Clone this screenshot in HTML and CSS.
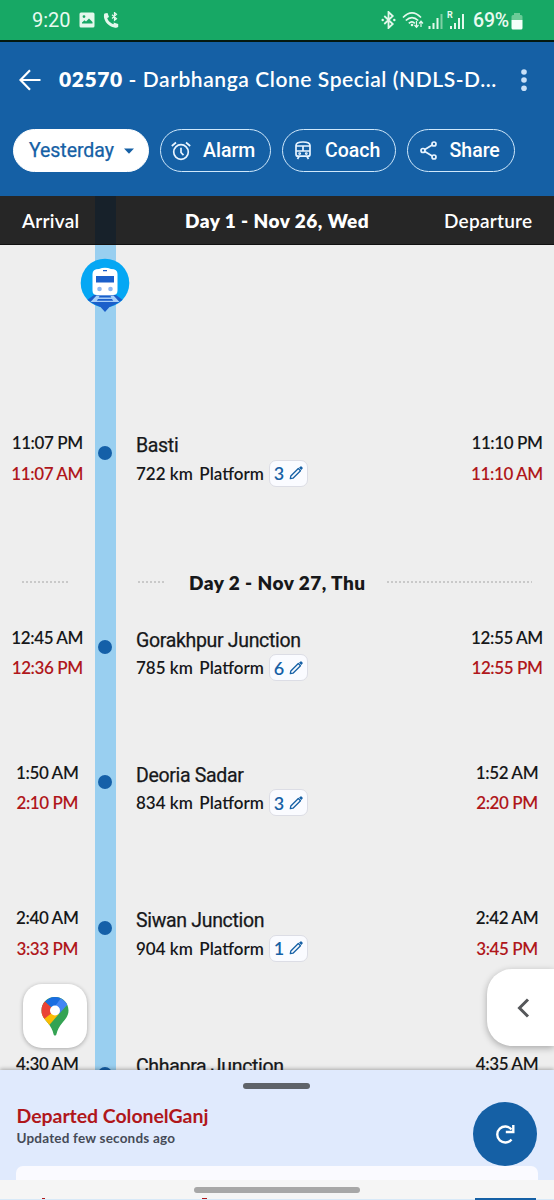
FILE: index.html
```html
<!DOCTYPE html>
<html lang="en">
<head>
<meta charset="utf-8">
<title>02570 - Darbhanga Clone Special</title>
<link rel="stylesheet" href="styles.css">
</head>
<body>
<svg class="defs" width="0" height="0">
  <symbol id="pencil" viewBox="0 0 14 14"><path d="M1.300 12.700 1.800 10 9.300 2.500l2.200 2.200L4 12.200z" fill="none" stroke="#1560a5" stroke-width="1.300" stroke-linejoin="round"/><path d="M10 1.700 11.500.4q.5-.4 1 .1l1 1q.5.500.1 1L12.300 4z" fill="#1560a5"/></symbol>
</svg>
<div class="screen">
  <div class="status">
    <span class="clock">9:20</span>
    <svg class="s-img" width="16" height="16" viewBox="0 0 16 16"><path fill="#e4f8ec" fill-rule="evenodd" d="M2 .5h12Q15.500.5 15.500 2v12q0 1.500-1.500 1.500H2Q.5 15.500.5 14V2Q.5.5 2 .5zM3 11.500h10.500V10L10 6.500 7 9.500 5.500 8.200 3 10.500zM5 3.200a1.400 1.400 0 1 0 0 2.800 1.400 1.400 0 0 0 0-2.800z"/></svg>
    <svg class="s-call" width="17" height="17" viewBox="0 0 17 17"><path d="M2.500 2.300C1.700 8.500 7 15 14.300 13.800" fill="none" stroke="#e4f8ec" stroke-width="3"/><path d="M1.300 1.500 4.500 1l1.500 4-2.500 1.500zM10.500 10.500l4.700 1.500v3l-3.500.8z" fill="#e4f8ec"/><path d="M9 2.700l4.500 4-2 1.600V.6l2 1.700L9 6.500" fill="none" stroke="#e4f8ec" stroke-width="1.200"/></svg>
    <span class="fill"></span>
    <svg class="s-bt" width="15" height="18" viewBox="0 0 16 18" preserveAspectRatio="none"><path d="M3.500 5l9 8-4.500 4V1l4.500 4-9 8" fill="none" stroke="#e4f8ec" stroke-width="1.900"/><circle cx="1.800" cy="9" r="1.300" fill="#e4f8ec"/><circle cx="14.200" cy="9" r="1.300" fill="#e4f8ec"/></svg>
    <svg class="s-wifi" width="22" height="18" viewBox="0 0 22 18"><g fill="none" stroke="#e4f8ec" stroke-width="1.700"><path d="M1 6.500Q10-2.500 19 6.500M3.800 9.500q6.200-5.800 12.400 0M6.800 12.300q3.200-3 6 0"/></g><circle cx="10" cy="14" r="1.300" fill="#e4f8ec"/><path d="M14.500 10v6m-2-2 2 2.300 2-2.300M19 16V10.500m-2 2 2-2.300 2 2.300" fill="none" stroke="#e4f8ec" stroke-width="1.200"/></svg>
    <svg class="s-sig" width="15" height="16" viewBox="0 0 15 16"><path d="M1.500 16v-3M5.500 16v-6M9.500 16V5" stroke="#e4f8ec" stroke-width="2"/><path d="M13.500 16V1" stroke="#7fd0a4" stroke-width="2"/></svg>
    <span class="roam"><span class="roam-r">R</span><svg width="17" height="18" viewBox="0 0 17 18"><path d="M3 17v-3M7 17V11M11 17V6M15 17V2" stroke="#e4f8ec" stroke-width="2"/></svg></span>
    <span class="batt-t">69%</span>
    <svg class="s-batt" width="12" height="17" viewBox="0 0 12 17"><path d="M3 0h6v2h1q1.500 0 1.500 1.500V7H.5V3.500Q.5 2 2 2h1z" fill="#6bcb97"/><path d="M.5 7h11v8q0 1.500-1.500 1.500H2Q.5 16.500.5 15z" fill="#f5fff9"/></svg>
  </div>
  <header class="top">
    <div class="title-row">
      <svg width="22" height="22" viewBox="0 0 22 22"><path d="M21.500 11H1.500M11 1.300 1.500 11l9.500 9.700" fill="none" stroke="#fff" stroke-width="2.200"/></svg>
      <h1 class="title"><b>02570</b> - Darbhanga Clone Special (NDLS-D...</h1>
      <svg class="kebab" width="6" height="24" viewBox="0 0 6 24"><g fill="#c9e0f7"><circle cx="3" cy="4" r="2.800"/><circle cx="3" cy="12" r="2.800"/><circle cx="3" cy="20.200" r="2.800"/></g></svg>
    </div>
    <div class="chips">
      <div class="chip chip-day"><span>Yesterday</span><svg width="10" height="6" viewBox="0 0 10 6"><path d="M0 .5h10L5 5.700z" fill="#1560a5"/></svg></div>
      <div class="chip chip-alarm"><svg width="20" height="20" viewBox="0 0 20 20" fill="none" stroke="#e8f4ff" stroke-width="1.700"><circle cx="10" cy="11" r="7.300"/><path d="M10 6.800v4.700l2.500 2.700M.8 5 5 1.500M19.200 5 15 1.500"/></svg><span>Alarm</span></div>
      <div class="chip chip-coach"><svg width="16" height="19" viewBox="0 0 16 19" fill="none" stroke="#e8f4ff" stroke-width="1.700"><path d="M1 4.500Q1 1 8 1t7 3.500v8.700q0 2-2 2H3q-2 0-2-2zM1 5h14M1 10h14M8 5v5M4 15.500 2.500 18M12 15.500l1.500 2.500"/><circle cx="4.700" cy="12.600" r=".6"/><circle cx="11.300" cy="12.600" r=".6"/></svg><span>Coach</span></div>
      <div class="chip chip-share"><svg width="17" height="19" viewBox="0 0 17 19" fill="none" stroke="#e8f4ff" stroke-width="1.700"><circle cx="3" cy="9.500" r="2"/><circle cx="14" cy="3" r="2"/><circle cx="14" cy="16" r="2"/><path d="M4.800 8.400 12.200 4M4.800 10.600l7.400 4.400"/></svg><span>Share</span></div>
    </div>
  </header>
  <div class="daybar">
    <div class="c">Arrival</div><div class="daybar-rail"></div><div class="day">Day 1 - Nov 26, Wed</div><div class="dep">Departure</div>
  </div>
  <main class="list">
    <div class="row lead"><div></div><div class="rail">
      <svg class="train" width="50" height="55" viewBox="0 0 50 55"><circle cx="25" cy="25" r="24.300" fill="#05a7f4"/><path d="M7.500 41.800C12 45.500 17 47.500 20.500 49l4.500 5 4.500-5C33 47.500 38 45.500 42.500 41.800L36 37H14z" fill="#1b5fca"/><path d="M16.500 37.500h17l6 6.500h-29z" fill="#a9cff8"/><path d="M19.500 38h11l.8 1.500H18.700zM18 41h14l1.200 1.700H16.800z" fill="#1b5fca"/><path d="M19 11q6-2.500 12 0 6.500 0 6.500 5v16.500q0 4.500-4.500 4.500H17q-4.500 0-4.500-4.500V16q0-5 6.500-5z" fill="#fff"/><path d="M16 18h18v6.500H16zM23 12h4v1.200h-4z" fill="#1b5fca"/><circle cx="19.500" cy="31" r="2.300" fill="#8fb7f0"/><circle cx="30.500" cy="31" r="2.300" fill="#8fb7f0"/></svg>
    </div></div>
    <div class="row basti">
      <div class="time"><span>11:07 PM</span><span class="red">11:07 AM</span></div><div class="rail"><i class="dot"></i></div>
      <div class="stn"><span class="name">Basti</span><div class="meta"><span>722 km</span><span>Platform</span><span class="pf">3<svg width="14" height="14"><use href="#pencil"/></svg></span></div></div>
      <div class="time"><span>11:10 PM</span><span class="red">11:10 AM</span></div>
    </div>
    <div class="row divider">
      <div><i class="dots dots-a"></i></div><div class="rail"></div>
      <div class="daydiv"><i class="dots dots-b"></i><span>Day 2 - Nov 27, Thu</span><i class="dots dots-c"></i></div>
    </div>
    <div class="row gkp">
      <div class="time"><span>12:45 AM</span><span class="red">12:36 PM</span></div><div class="rail"><i class="dot"></i></div>
      <div class="stn"><span class="name">Gorakhpur Junction</span><div class="meta"><span>785 km</span><span>Platform</span><span class="pf">6<svg width="14" height="14"><use href="#pencil"/></svg></span></div></div>
      <div class="time"><span>12:55 AM</span><span class="red">12:55 PM</span></div>
    </div>
    <div class="row deo">
      <div class="time"><span>1:50 AM</span><span class="red">2:10 PM</span></div><div class="rail"><i class="dot"></i></div>
      <div class="stn"><span class="name">Deoria Sadar</span><div class="meta"><span>834 km</span><span>Platform</span><span class="pf">3<svg width="14" height="14"><use href="#pencil"/></svg></span></div></div>
      <div class="time"><span>1:52 AM</span><span class="red">2:20 PM</span></div>
    </div>
    <div class="row siwan">
      <div class="time"><span>2:40 AM</span><span class="red">3:33 PM</span></div><div class="rail"><i class="dot"></i></div>
      <div class="stn"><span class="name">Siwan Junction</span><div class="meta"><span>904 km</span><span>Platform</span><span class="pf">1<svg width="14" height="14"><use href="#pencil"/></svg></span></div></div>
      <div class="time"><span>2:42 AM</span><span class="red">3:45 PM</span></div>
    </div>
    <div class="row last">
      <div class="time"><span>4:30 AM</span></div><div class="rail"><i class="dot"></i></div>
      <div class="stn"><span class="name">Chhapra Junction</span></div>
      <div class="time"><span>4:35 AM</span></div>
    </div>
    <div class="map"><svg width="28" height="39" viewBox="0 0 28 39"><defs><clipPath id="pin"><path d="M14 0C6 0 .5 6 .5 13.500c0 5 2.500 8 5.500 11.500 4 4.500 5.500 8 6.500 12 .5 2 2.500 2 3 0 1-4 2.500-7.500 6.500-12 3-3.500 5.500-6.500 5.500-11.500C27.500 6 22 0 14 0z"/></clipPath></defs><g clip-path="url(#pin)"><path d="M0 0h28v39H0z" fill="#34a353"/><path d="M-2 16 14 13.500l4 3.300L7.500 29-2 30z" fill="#fbbc04"/><path d="M-1 1 4 4.500l10 9L2.500 22.500-2 20z" fill="#ea4335"/><path d="M4 4.500 14-3l6 3-6 13.500z" fill="#1a6de0"/><path d="M12 12 20 1l7 6-9 10z" fill="#4285f4"/></g><circle cx="14" cy="13.500" r="5" fill="#fff"/></svg></div>
    <div class="drawer"><svg width="13" height="20" viewBox="0 0 13 20"><path d="M11 1.500 2.500 10l8.500 8.500" fill="none" stroke="#55575a" stroke-width="3"/></svg></div>
  </main>
  <section class="sheet">
    <div class="handle"></div>
    <div class="sheet-row">
      <div class="info"><div class="departed">Departed ColonelGanj</div><div class="updated">Updated few seconds ago</div></div>
      <div class="refresh"><svg width="22" height="22" viewBox="0 0 22 22" fill="none" stroke="#fff" stroke-width="2.400"><path d="M17.500 16.500A8 8 0 1 1 17.500 6.500"/><path d="M19.300 2v7h-7.500"/></svg></div>
    </div>
    <div class="card"></div>
    <div class="nav"><div class="gesture"></div><div class="peek"><i class="bit"></i><i class="bit bit-w"></i><i class="btn-top"></i></div></div>
  </section>
</div>
</body>
</html>
```
FILE: styles.css
```css
* { box-sizing: border-box; }
body { margin: 0; font-family: Lato, "Open Sans", sans-serif; color: #17181a; }
.defs { position: absolute; }
svg { display: block; flex: none; }
.screen { width: 554px; height: 1200px; display: flex; flex-direction: column; overflow: hidden; background: #eee; }
.status { height: 42px; flex: none; display: flex; align-items: center; background: #17a865; border-bottom: 2px solid #04180f; padding: 0 31px 0 32px; font-family: Roboto, sans-serif; color: #e8faf0; }
.clock { font-size: 20px; width: 47px; }
.s-call { margin-left: 8px; }
.fill { flex: 1; }
.s-wifi { margin-left: 6px; }
.s-sig { margin-left: 4px; margin-top: 2px; }
.roam { position: relative; margin-left: 5px; margin-top: 2px; }
.roam-r { position: absolute; left: -1px; top: -2px; font-size: 9px; line-height: 10px; font-weight: 700; }
.batt-t { font-size: 19.5px; margin-left: 8px; font-weight: 500; letter-spacing: -0.2px; }
.s-batt { margin-left: 2px; margin-top: 2px; }
.top { height: 154px; flex: none; background: #1560a5; color: #fff; }
.title-row { height: 76px; display: flex; align-items: center; padding: 0 27px 0 19px; }
.title { margin: -2px 0 0 18px; flex: 1; font-size: 21px; font-weight: 600; line-height: 28px; letter-spacing: 0.57px; white-space: nowrap; }
.title b { font-weight: 800; }
.chips { display: flex; gap: 11px; padding: 11px 0 0 13px; font: 500 19.5px Roboto, sans-serif; }
.chip { height: 43px; border: 1.5px solid #cfe8fb; border-radius: 22px; display: flex; align-items: center; }
.chip-day { width: 136px; background: #fff; border-color: #fff; color: #1560a5; padding-left: 15px; gap: 10px; font-weight: 400; font-size: 19.5px; -webkit-text-stroke: 0.25px; }
.chip-day span { letter-spacing: -0.05px; margin-top: -1px; }
.chip-alarm { width: 111px; padding-left: 10px; gap: 12px; }
.chip-coach { width: 114px; padding-left: 12px; gap: 14px; }
.chip-share { width: 108px; padding-left: 11.5px; gap: 13px; }
.daybar { height: 49px; flex: none; display: grid; grid-template-columns: 94.5px 21.5px 1fr 132px; align-items: center; background: #262626; color: #fff; font-size: 19px; font-weight: 600; border-bottom: 1px solid #111; }
.c { padding-left: 22px; letter-spacing: 0.25px; }
.daybar-rail { height: 100%; background: #17212a; }
.day { padding-left: 69px; font-size: 19px; font-weight: 800; letter-spacing: 0.47px; white-space: nowrap; }
.dep { padding-left: 22px; letter-spacing: 0.25px; }
.list { height: 825px; flex: none; position: relative; overflow: hidden; }
.row { display: grid; grid-template-columns: 94.5px 21.5px 1fr 94px; }
.rail { background: #99cff0; }
.lead { height: 188px; }
.train { margin: 13px 0 0 -14.500px; }
.basti { height: 138px; }
.divider { height: 56.500px; grid-template-columns: 94.500px 21.500px 1fr; }
.gkp { height: 135px; }
.deo { height: 145.500px; }
.siwan { height: 146px; }
.last { height: 40px; }
.dot { display: block; width: 14px; height: 14px; margin: 12.500px auto 0; border-radius: 50%; background: #1560a8; }
.time { display: flex; flex-direction: column; align-items: center; font-size: 17px; font-weight: 600; line-height: 20px; gap: 10.500px; letter-spacing: -0.4px; white-space: nowrap; }
.red { color: #b0171b; }
.stn { padding-left: 20px; }
.name { display: block; font: 400 19.500px/24px Roboto, sans-serif; letter-spacing: -0.32px; padding-top: 1px; white-space: nowrap; -webkit-text-stroke: 0.25px; }
.meta { display: flex; align-items: center; height: 28px; margin-top: 1px; font-size: 17px; font-weight: 600; white-space: nowrap; }
.meta span + span { margin-left: 6.500px; }
.meta .pf { width: 39px; height: 27px; margin-left: 5px; display: flex; align-items: center; justify-content: center; gap: 5px; border: 1.500px solid #dcdde5; border-radius: 7px; background: #fafbff; color: #1560a5; font-size: 18px; }
.dots { display: block; height: 2px; background: repeating-linear-gradient(90deg, #c9c9c9 0 2px, transparent 2px 4px); }
.dots-a { width: 48px; margin: 10px 0 0 22px; }
.daydiv { display: flex; height: 22px; align-items: center; padding-left: 22px; font-size: 19px; font-weight: 800; letter-spacing: 0.47px; white-space: nowrap; }
.dots-b { width: 27px; margin-right: 24px; }
.dots-c { width: 145px; margin-left: auto; margin-right: 22px; }
.map { position: absolute; left: 23px; top: 739px; width: 64px; height: 64px; border-radius: 19px; background: #fff; box-shadow: 0 1px 4px rgba(0,0,0,.3); display: flex; align-items: center; justify-content: center; }
.drawer { position: absolute; right: 0; top: 724px; width: 67px; height: 77px; border-radius: 25px 0 0 25px; background: #fff; box-shadow: 0 2px 7px rgba(0,0,0,.3); display: flex; align-items: center; padding-left: 30px; }
.sheet { height: 130px; flex: none; background: #e0eafd; box-shadow: 0 -1px 4px rgba(0,0,0,.3); position: relative; display: flex; flex-direction: column; }
.handle { width: 67px; height: 6px; border-radius: 3px; background: #5f6369; margin: 13px 0 0 243px; }
.sheet-row { display: flex; justify-content: space-between; height: 77px; padding: 0 17px 0 16.500px; }
.info { padding-top: 14px; }
.departed { color: #b0171b; font-size: 19.500px; line-height: 26px; font-weight: 700; letter-spacing: -0.05px; }
.updated { color: #454b57; font-size: 13.500px; line-height: 18px; font-weight: 700; letter-spacing: 0.2px; }
.refresh { width: 64px; height: 64px; margin-top: 13px; border-radius: 50%; background: #1560a5; display: flex; align-items: center; justify-content: center; }
.card { height: 14px; margin: 0 16px; border-radius: 7px 7px 0 0; background: #fafaff; }
.nav { height: 20px; display: flex; flex-direction: column; background: linear-gradient(#f5f5f5 19px, #d7e9f8 19px); }
.gesture { width: 166px; height: 6px; border-radius: 3px; background: #a7a7a7; margin: 7px 0 0 194px; }
.peek { display: flex; height: 2px; margin-top: auto; padding-left: 42px; }
.bit { width: 3px; height: 1px; background: #b0171b; }
.bit-w { margin-left: 157px; width: 5px; }
.btn-top { width: 61px; height: 2px; margin-left: 268px; background: #1560a5; }
```
